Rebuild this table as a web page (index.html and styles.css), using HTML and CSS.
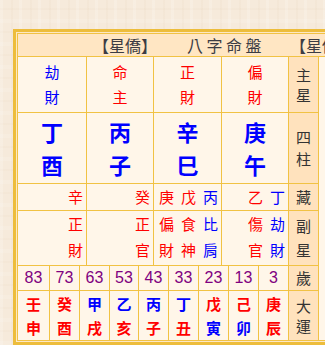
FILE: index.html
```html
<!DOCTYPE html>
<html lang="zh-Hant">
<head>
<meta charset="utf-8">
<title>八字命盤</title>
<link rel="stylesheet" href="styles.css">
</head>
<body>
<div class="board">
  <div class="grid">
    <div class="hdr"><span class="brand">【星僑】</span><span class="title">八字命盤</span><span class="brand">【星僑】</span></div>

    <div class="cell star"><span class="b">劫<br>財</span></div>
    <div class="cell star"><span class="r">命<br>主</span></div>
    <div class="cell star"><span class="r">正<br>財</span></div>
    <div class="cell star"><span class="r">偏<br>財</span></div>
    <div class="lab l20">主<br>星</div>
    <div class="ext"></div>

    <div class="cell pillar"><span class="b">丁<br>酉</span></div>
    <div class="cell pillar"><span class="b">丙<br>子</span></div>
    <div class="cell pillar"><span class="b">辛<br>巳</span></div>
    <div class="cell pillar"><span class="b">庚<br>午</span></div>
    <div class="lab l22">四<br>柱</div>

    <div class="cell hid"><span class="r">辛</span></div>
    <div class="cell hid"><span class="r">癸</span></div>
    <div class="cell hid"><span class="r">庚</span><span class="r">戊</span><span class="b">丙</span></div>
    <div class="cell hid"><span class="r">乙</span><span class="b">丁</span></div>
    <div class="lab">藏</div>

    <div class="cell hid sub"><span class="r">正<br>財</span></div>
    <div class="cell hid sub"><span class="r">正<br>官</span></div>
    <div class="cell hid sub"><span class="r">偏<br>財</span><span class="r">食<br>神</span><span class="b">比<br>肩</span></div>
    <div class="cell hid sub"><span class="r">傷<br>官</span><span class="b">劫<br>財</span></div>
    <div class="lab l24">副<br>星</div>

    <div class="dayun">
      <div class="age">83</div><div class="age">73</div><div class="age">63</div><div class="age">53</div><div class="age">43</div><div class="age">33</div><div class="age">23</div><div class="age">13</div><div class="age">3</div>
      <div class="dy"><span class="r">壬</span><span class="r">申</span></div>
      <div class="dy"><span class="r">癸</span><span class="r">酉</span></div>
      <div class="dy"><span class="b">甲</span><span class="r">戌</span></div>
      <div class="dy"><span class="b">乙</span><span class="r">亥</span></div>
      <div class="dy"><span class="b">丙</span><span class="r">子</span></div>
      <div class="dy"><span class="b">丁</span><span class="r">丑</span></div>
      <div class="dy"><span class="r">戊</span><span class="b">寅</span></div>
      <div class="dy"><span class="r">己</span><span class="b">卯</span></div>
      <div class="dy"><span class="r">庚</span><span class="r">辰</span></div>
    </div>
    <div class="lab">歲</div>
    <div class="lab l20">大<br>運</div>
  </div>
</div>
</body>
</html>
```

FILE: styles.css
```css
html, body {
  margin: 0;
  padding: 0;
  overflow: hidden;
}
body {
  width: 325px;
  height: 345px;
  background-color: #f6eadb;
  background-image:
    repeating-linear-gradient(90deg, rgba(255,255,255,0.18) 0 3px, rgba(0,0,0,0) 3px 11px, rgba(205,175,135,0.06) 11px 13px, rgba(0,0,0,0) 13px 19px),
    repeating-linear-gradient(0deg, rgba(255,255,255,0.12) 0 4px, rgba(0,0,0,0) 4px 13px, rgba(210,180,140,0.05) 13px 15px, rgba(0,0,0,0) 15px 23px);
  font-family: "Noto Sans CJK TC", "Noto Sans CJK SC", sans-serif;
}
.board {
  margin: 29px 0 0 13px;
  width: 400px;
  border: 3px solid #edbd3c;
  padding: 1px;
  background: #fde8c4;
}
.grid {
  display: grid;
  grid-template-columns: 68px 66px 67px 66px 29px 120px;
  grid-template-rows: 22px 55px 70px 26px 54px 24px 49px;
  gap: 1px;
  background: #f1c244;
  border: 1px solid #f1c244;
}
.hdr {
  grid-column: 1 / -1;
  background: #ffe6c3;
  font-size: 16px;
  line-height: 22px;
  color: #3c3c44;
  padding-left: 75px;
  white-space: nowrap;
  overflow: hidden;
}
.title {
  letter-spacing: 3.5px;
  margin: 0 25px 0 30px;
}
.cell {
  background: #fff6e9;
  display: flex;
  align-items: center;
  justify-content: center;
  font-size: 15px;
}
.r { color: #ff0000; }
.b { color: #0000ff; }
.star span {
  line-height: 25px;
  text-align: center;
  margin-top: -2px;
}
.pillar span {
  font-size: 22px;
  font-weight: 700;
  line-height: 33px;
  text-align: center;
}
.hid {
  justify-content: flex-end;
  padding-right: 3px;
  gap: 7px;
}
.hid span {
  line-height: 26px;
}
.sub span {
  line-height: 26px;
  margin-top: -2px;
}
.lab {
  background: #ffe2bd;
  color: #333333;
  font-size: 15px;
  display: flex;
  align-items: center;
  justify-content: center;
  text-align: center;
  line-height: 18px;
}
.l20 { line-height: 20px; }
.l22 { line-height: 22px; }
.l24 { line-height: 24px; }
.ext {
  grid-column: 6;
  grid-row: 2 / span 6;
  background: #fff6e9;
}
.dayun {
  grid-column: 1 / span 4;
  grid-row: 6 / span 2;
  display: grid;
  grid-template-columns: 31px 29px 29px 28px 29px 29px 29px 29px 29px;
  grid-template-rows: 24px 49px;
  gap: 1px;
  background: #f1c244;
}
.age {
  background: #fff6e9;
  color: #800080;
  font-family: "Liberation Sans", Arial, sans-serif;
  font-size: 16px;
  display: flex;
  align-items: center;
  justify-content: center;
}
.dy {
  background: #fff6e9;
  display: flex;
  flex-direction: column;
  align-items: center;
  justify-content: center;
  font-size: 15px;
  font-weight: 700;
  line-height: 24px;
}
```
